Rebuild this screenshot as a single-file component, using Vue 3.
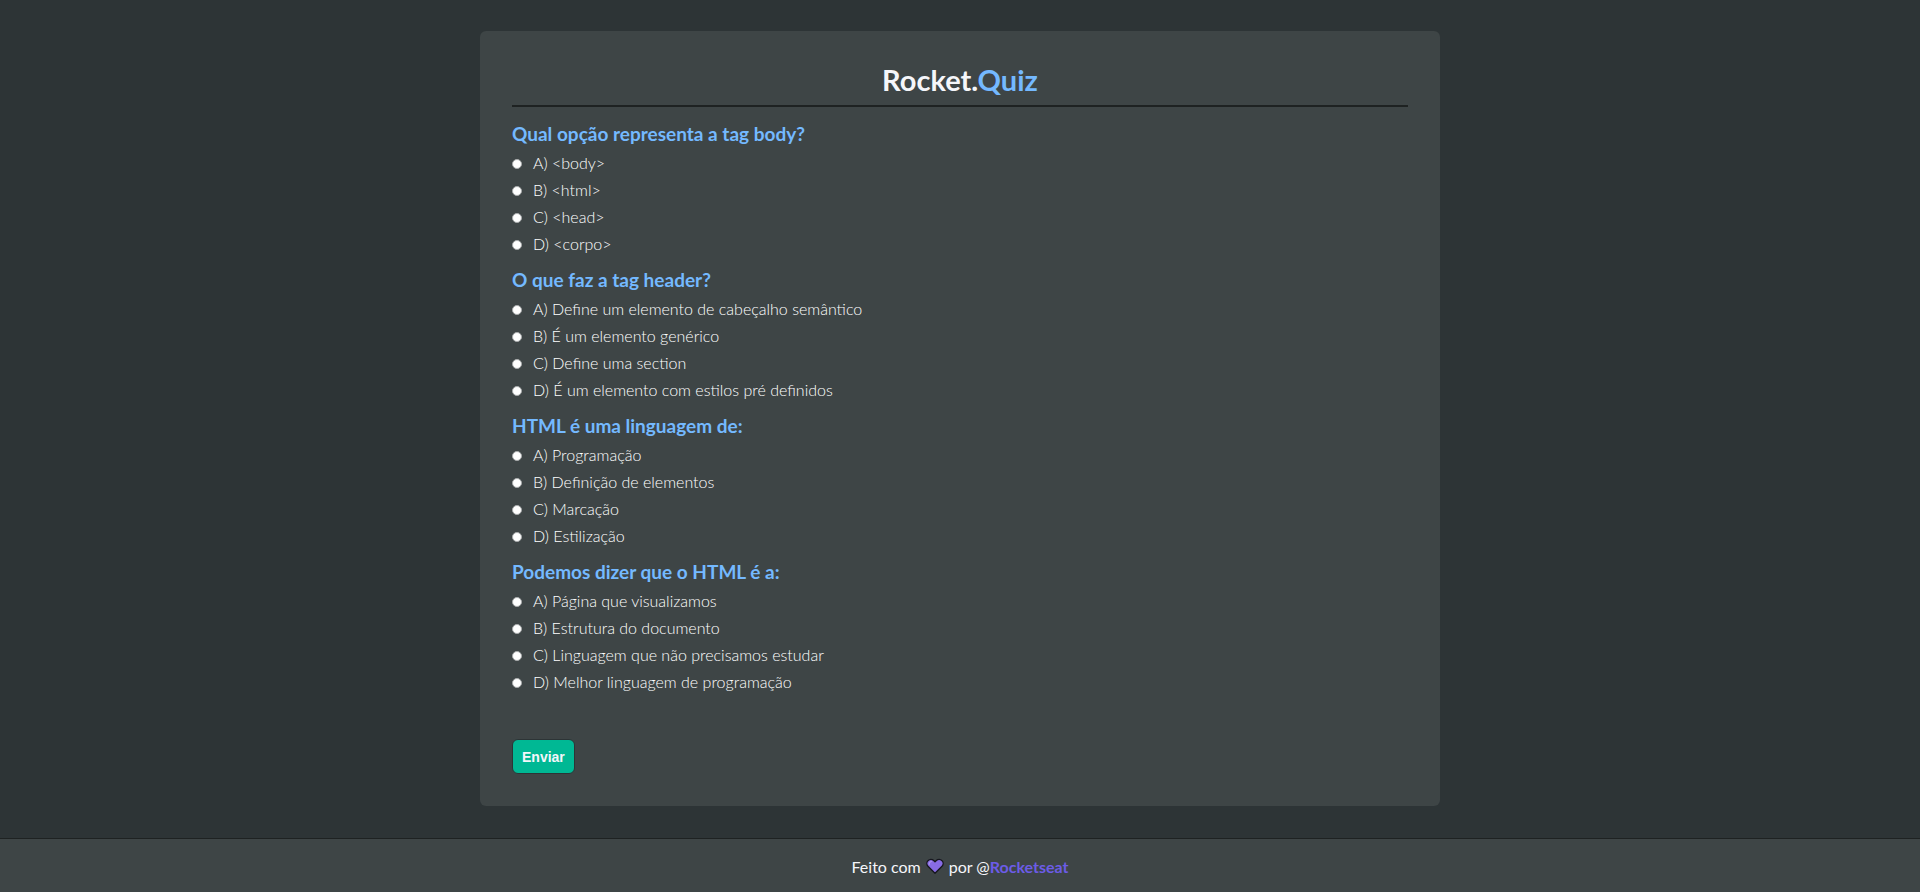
<script setup>
import { reactive } from 'vue'

const questions = [
  {
    id: 'body',
    title: 'Qual opção representa a tag body?',
    options: ['A) <body>', 'B) <html>', 'C) <head>', 'D) <corpo>'],
  },
  {
    id: 'header',
    title: 'O que faz a tag header?',
    options: [
      'A) Define um elemento de cabeçalho semântico',
      'B) É um elemento genérico',
      'C) Define uma section',
      'D) É um elemento com estilos pré definidos',
    ],
  },
  {
    id: 'linguagem',
    title: 'HTML é uma linguagem de:',
    options: ['A) Programação', 'B) Definição de elementos', 'C) Marcação', 'D) Estilização'],
  },
  {
    id: 'html',
    title: 'Podemos dizer que o HTML é a:',
    options: [
      'A) Página que visualizamos',
      'B) Estrutura do documento',
      'C) Linguagem que não precisamos estudar',
      'D) Melhor linguagem de programação',
    ],
  },
]

const answers = reactive({})
</script>

<template>
  <div class="page">
    <main class="card">
      <header class="card-header">
        <h1>Rocket.<span>Quiz</span></h1>
      </header>
      <form @submit.prevent>
        <fieldset v-for="q in questions" :key="q.id" class="question">
          <legend>{{ q.title }}</legend>
          <div v-for="(option, i) in q.options" :key="option" class="option">
            <input :id="`${q.id}-${i}`" v-model="answers[q.id]" type="radio" :name="q.id" :value="i" />
            <label :for="`${q.id}-${i}`">{{ option }}</label>
          </div>
        </fieldset>
        <button type="submit">Enviar</button>
      </form>
    </main>
    <footer class="footer">
      <p>
        <span>Feito com</span>
        <svg class="heart" viewBox="0 0 20 18" role="img" aria-label="amor">
          <path
            d="M10 16.5 2.2 8.8C.5 7 .6 4.200 2.200 2.500 4 .7 6.800.7 8.500 2.300L10 3.800l1.500-1.500c1.700-1.600 4.500-1.600 6.300.2 1.600 1.700 1.700 4.500 0 6.300Z"
            fill="#886ce4" stroke="#17171f" stroke-width="1.500" stroke-linejoin="round"
          />
          <path d="M3.600 6.800C3.500 5 4.500 3.600 6 3.400" fill="none" stroke="#a993ee" stroke-width="1.300" stroke-linecap="round" />
        </svg>
        <span>por @<a href="#">Rocketseat</a></span>
      </p>
    </footer>
  </div>
</template>

<style>
body {
  margin: 0;
  background: #2d3436;
}
</style>

<style scoped>
.page {
  display: flex;
  flex-direction: column;
  min-height: 100vh;
  box-sizing: border-box;
  padding-top: 31px;
  color: #f5f6fa;
  font-family: Lato, 'Liberation Sans', sans-serif;
  font-size: 16px;
}

.card {
  width: 50%;
  box-sizing: border-box;
  margin: 0 auto 32px;
  padding: 32px;
  border-radius: 6px;
  background: #3e4546;
}

.card-header {
  margin-bottom: 5px;
  padding-bottom: 8px;
  border-bottom: 2px solid #1e2222;
  text-align: center;
}

h1 {
  margin: 0;
  font-size: 29px;
  line-height: 34px;
  font-weight: 700;
}

h1 span {
  color: #74b9ff;
}

.question {
  min-width: 0;
  margin: 0;
  padding: 0;
  border: 0;
}

legend {
  box-sizing: border-box;
  height: 38px;
  padding: 10px 0 4px;
  color: #74b9ff;
  font-size: 19px;
  line-height: 24px;
  font-weight: 700;
}

.option {
  display: flex;
  align-items: center;
  gap: 11px;
  height: 27px;
  color: #fff;
  font-weight: 300;
}

.option label {
  padding-bottom: 2px;
  line-height: 20px;
}

.option input {
  appearance: none;
  flex: none;
  width: 10px;
  height: 10px;
  margin: 0;
  border: 1px solid #a9acad;
  border-radius: 50%;
  background: #fff;
}

.option input:checked {
  border: 3px solid #74b9ff;
}

button {
  display: block;
  margin-top: 43px;
  padding: 9px 9px 7px;
  border: 1px solid #2d3436;
  border-radius: 6px;
  background: #00b894;
  color: #f5f6fa;
  font-family: 'Liberation Sans', Arial, sans-serif;
  font-size: 14px;
  line-height: 17px;
  font-weight: 700;
  cursor: pointer;
}

.footer {
  display: flex;
  flex: 1;
  align-items: center;
  justify-content: center;
  border-top: 1px solid #1e2222;
  background: #3e4546;
}

.footer p {
  display: flex;
  align-items: center;
  gap: 5px;
  margin: 0;
  padding-top: 2px;
  line-height: 20px;
}

.heart {
  width: 18px;
  height: 17px;
}

.footer a {
  color: #6c5ce7;
  font-weight: 700;
  text-decoration: none;
}
</style>
